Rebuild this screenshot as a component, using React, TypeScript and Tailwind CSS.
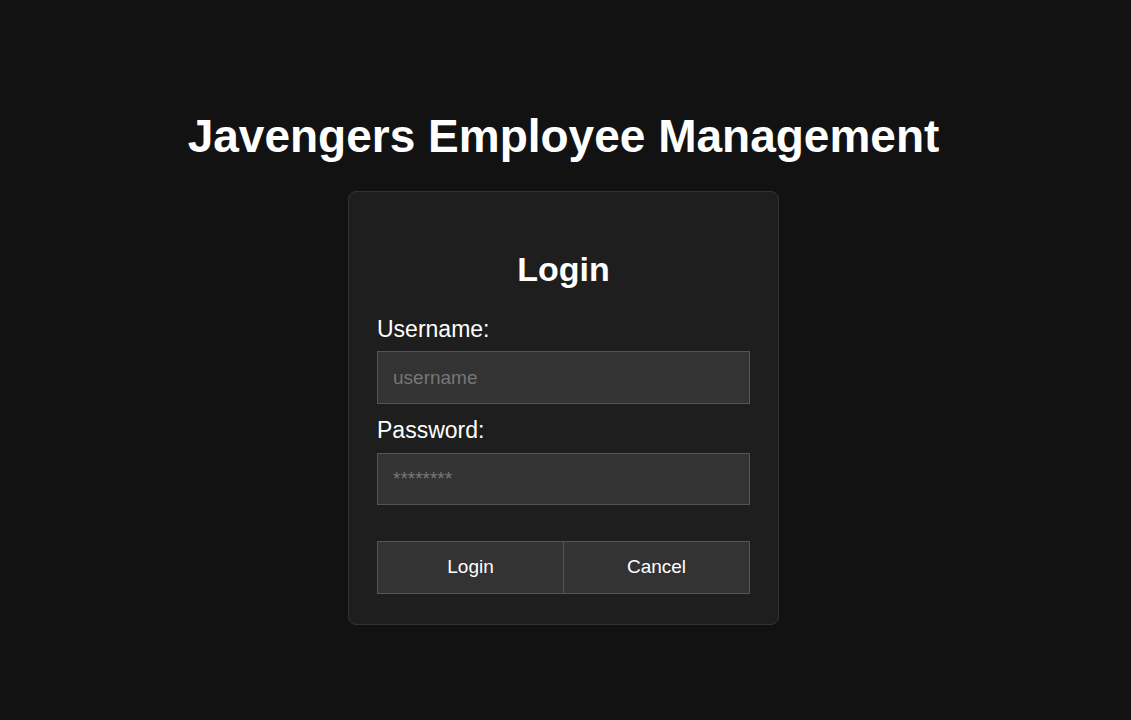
export default function App() {
  return (
    <div
      className="min-h-screen w-full bg-[#121212] text-white flex flex-col items-center pr-[4px]"
      style={{ fontFamily: '"Liberation Sans", Arial, sans-serif' }}
    >
      <h1 className="mt-[108px] text-[46px] leading-[56px] font-bold">Javengers Employee Management</h1>
      <div className="mt-[27px] w-[431px] bg-[#1e1e1e] border border-[#333333] rounded-lg px-[28px] pt-[57px] pb-[30px]">
        <h2 className="text-center text-[34px] leading-[40px] font-bold">Login</h2>
        <form className="mt-[27px] flex flex-col">
          <label className="text-[23px] leading-[27px]">Username:</label>
          <input
            type="text"
            placeholder="username"
            className="mt-[8px] h-[53px] w-full bg-[#333333] border border-[#555555] px-[15px] text-[19px] text-white placeholder-[#777777] outline-none"
          />
          <label className="mt-[13px] text-[23px] leading-[27px]">Password:</label>
          <input
            type="password"
            placeholder="********"
            className="mt-[9px] h-[52px] w-full bg-[#333333] border border-[#555555] px-[15px] text-[19px] text-white placeholder-[#777777] outline-none"
          />
          <div className="mt-[36px] flex">
            <button
              type="button"
              className="flex-1 h-[53px] bg-[#333333] border border-[#555555] text-[19px] text-white"
            >
              Login
            </button>
            <button
              type="button"
              className="flex-1 h-[53px] bg-[#333333] border border-l-0 border-[#555555] text-[19px] text-white"
            >
              Cancel
            </button>
          </div>
        </form>
      </div>
    </div>
  );
}
